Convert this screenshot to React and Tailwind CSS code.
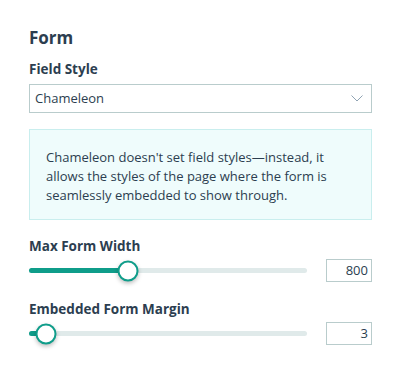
import React from 'react';

function Slider({ label, percent, value }) {
  return (
    <div className="flex flex-col">
      <label className="text-[13.5px] font-bold text-[#2c3e50] leading-[18px]">{label}</label>
      <div className="mt-[4px] flex items-center justify-between">
        <div className="relative h-[5px] w-[278px] shrink-0 rounded-full bg-[#e0eaea]">
          <div className="h-full rounded-full bg-[#0f9d8a]" style={{ width: `${percent}%` }} />
          <div
            className="absolute top-1/2 h-[21px] w-[21px] -translate-x-1/2 -translate-y-1/2 rounded-full border-2 border-[#0f9d8a] bg-white shadow-[0_2px_4px_rgba(0,0,0,0.25)]"
            style={{ left: `${percent}%` }}
          />
        </div>
        <div className="flex h-[23px] w-[46px] items-center justify-end border border-[#b9cccc] pr-[3px] text-[13px] text-[#2c3e50]">
          {value}
        </div>
      </div>
    </div>
  );
}

export default function App() {
  return (
    <div className="w-[393px] h-[373px] bg-white pl-[29px] pr-[21px] pt-[27px] font-['Open_Sans',sans-serif] text-[#2c3e50]">
      <h2 className="text-[17px] font-bold leading-[22px]">Form</h2>

      <div className="mt-[11px]">
        <label className="block text-[13.5px] font-bold leading-[18px]">Field Style</label>
        <div className="mt-[6px] flex h-[29px] w-full items-center justify-between border border-[#b9cccc] pl-[5px] pr-[8px]">
          <span className="text-[13px] text-[#2c3e50]">Chameleon</span>
          <svg width="12" height="7" viewBox="0 0 12 7" fill="none">
            <path d="M0.5 0.5 L6 6 L11.5 0.5" stroke="#8fa3b3" strokeWidth="1" />
          </svg>
        </div>
      </div>

      <div className="mt-[16px] w-full border border-[#c9eeee] bg-[#effcfc] px-[16px] pt-[18px] pb-[14px] text-[13px] leading-[19px] text-[#2c3e50]">
        Chameleon doesn't set field styles—instead, it allows the styles of the page where the form is seamlessly embedded to show through.
      </div>

      <div className="mt-[17px] flex flex-col gap-[18px]">
        <Slider label="Max Form Width" percent={35.5} value="800" />
        <Slider label="Embedded Form Margin" percent={6} value="3" />
      </div>
    </div>
  );
}
